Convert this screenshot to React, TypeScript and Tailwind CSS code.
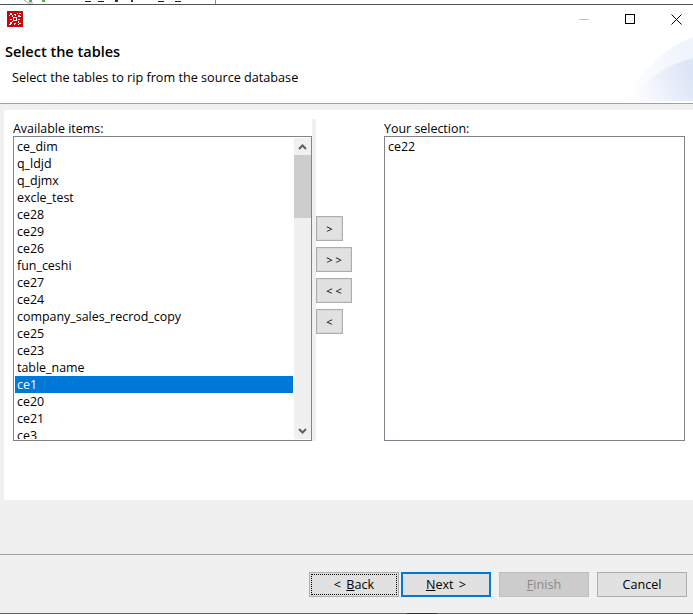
const items = ["ce_dim","q_ldjd","q_djmx","excle_test","ce28","ce29","ce26","fun_ceshi","ce27","ce24","company_sales_recrod_copy","ce25","ce23","table_name","ce1","ce20","ce21","ce3"];

function ShiftBtn({ label, wide }: { label: string; wide?: boolean }) {
  return (
    <button className={`h-[25px] ${wide ? "w-[36px]" : "w-[27px]"} border border-[#adadad] outline outline-[#d8d8d8] -outline-offset-2 bg-[#e1e1e1] text-[11px] leading-[21px] text-black flex items-center justify-center`}>{label}</button>
  );
}

function FootBtn({ children, cls }: { children: React.ReactNode; cls: string }) {
  return <button className={`h-[25px] w-[90px] flex items-center justify-center pt-[2px] text-[12.6px] [word-spacing:2px] ${cls}`}>{children}</button>;
}

export default function App() {
  return (
    <div className="w-[693px] h-[616px] overflow-hidden bg-white flex flex-col font-['Open_Sans','Liberation_Sans',sans-serif] text-[12px] text-black">
      <div className="h-[4px] bg-white">
        <svg width="216" height="4" viewBox="0 0 216 4" className="block">
          <path d="M24 0L28 3L33 3" stroke="#a8a8a8" fill="none" />
          <rect x="29" y="0" width="3" height="2" fill="#3fb54a" />
          <rect x="42" y="0" width="3" height="2" fill="#3fb54a" />
          <path d="M85 1.5h6M98 1.5h6M158 1.5h6M175 1.5h6" stroke="#222" fill="none" />
          <rect x="115" y="0" width="3" height="2" fill="#333" />
          <rect x="131" y="0" width="2" height="2" fill="#335" />
          <rect x="215" y="0" width="1" height="4" fill="#8a8a8a" />
        </svg>
      </div>
      <div className="h-[1px] bg-[#555555]" />
      <div className="relative h-[98px] bg-white">
        <div className="pt-[6px] pl-[7px] h-[37px]">
          <svg width="16" height="16" viewBox="0 0 16 16" shapeRendering="crispEdges" className="block">
            <rect width="16" height="16" fill="#c8070a" />
            <path d="M3 2h2v2H3zM2 4h1v1H2zM5 4h1v2H5zM10 2h1v1h-1zM12 2h2v1h-2zM11 4h2v2h-2zM13 5h1v1h-1zM6 6h4v1H6zM6 7h1v2H6zM9 7h1v2H9zM6 9h4v1H6zM7 3h2v1H7zM8 4h1v1H8zM3 8h2v1H3zM11 8h2v1h-2zM3 11h2v2H3zM2 13h2v1H2zM5 10h1v1H5zM11 10h1v2h-1zM12 12h2v1h-2zM11 13h1v1h-1zM7 12h2v1H7zM7 13h1v1H7z" fill="#fff" />
          </svg>
        </div>
        <div className="pl-[5px] text-[14.5px] leading-[20px] font-semibold">Select the tables</div>
        <div className="pl-[12px] pt-[6px] text-[12.65px] leading-[19px]">Select the tables to rip from the source database</div>
        <svg className="absolute right-0 top-[31px]" width="68" height="65" viewBox="0 0 68 65">
          <defs>
            <linearGradient id="g" x1="0" x2="1" y1="1" y2="0.5">
              <stop offset="0" stopColor="#ffffff" />
              <stop offset="1" stopColor="#f0f4fc" />
            </linearGradient>
            <linearGradient id="h" x1="0" x2="1" y1="0.9" y2="0.6">
              <stop offset="0" stopColor="#ffffff" />
              <stop offset="1" stopColor="#dde6f7" />
            </linearGradient>
          </defs>
          <path d="M0 65C14 38 36 13 68 1V65Z" fill="url(#g)" />
          <path d="M5 65C20 44 42 28 68 22V65Z" fill="url(#h)" />
        </svg>
        <div className="absolute -right-[6px] top-[2px] flex items-center">
          <div className="w-[46px] h-[24px] flex items-center justify-center"><div className="w-[10px] h-[1px] bg-[#c4c4c4]" /></div>
          <div className="w-[46px] h-[24px] flex items-center justify-center"><div className="w-[10px] h-[10px] border border-black" /></div>
          <div className="w-[46px] h-[24px] flex items-center justify-center">
            <svg width="11" height="11" viewBox="0 0 11 11"><path d="M0.5 0.5L10.5 10.5M10.5 0.5L0.5 10.5" stroke="#000" fill="none" /></svg>
          </div>
        </div>
      </div>
      <div className="h-[1px] bg-[#a0a0a0]" />
      <div className="h-[6px] bg-[#f0f0f0]" />
      <div className="h-[390px] bg-[#f0f0f0] pl-[4px]">
        <div className="h-full bg-white pl-[9px] pt-[9px] flex">
          <div className="w-[303px] bg-[#f0f0f0] h-[322px]">
            <div className="bg-white h-[17px] leading-[20px] text-[12.45px] w-[299px]">Available items:</div>
            <div className="w-[299px] h-[305px] border border-[#82828a] bg-white pl-[1px] pt-[1px] flex gap-[1px] overflow-hidden">
              <div className="w-[278px] h-[301px] overflow-hidden">
                {items.map((t) => (
                  <div key={t} className={`h-[17px] leading-[18px] pl-[2px] text-[12.45px] ${t === "ce1" ? "bg-[#0078d7] text-white" : ""}`}>{t}</div>
                ))}
              </div>
              <div className="w-[17px] h-[301px] bg-[#f0f0f0] flex flex-col">
                <div className="h-[17px] flex items-center justify-center">
                  <svg width="9" height="6" viewBox="0 0 9 6"><path d="M1 5L4.5 1.5L8 5" stroke="#606060" strokeWidth="2" fill="none" /></svg>
                </div>
                <div className="h-[63px] bg-[#cdcdcd]" />
                <div className="flex-1" />
                <div className="h-[17px] flex items-center justify-center">
                  <svg width="9" height="6" viewBox="0 0 9 6"><path d="M1 1L4.5 4.5L8 1" stroke="#606060" strokeWidth="2" fill="none" /></svg>
                </div>
              </div>
            </div>
          </div>
          <div className="w-[68px] pt-[97px] flex flex-col gap-[6px] items-start">
            <ShiftBtn label=">" />
            <ShiftBtn label="> >" wide />
            <ShiftBtn label="< <" wide />
            <ShiftBtn label="<" />
          </div>
          <div className="w-[301px]">
            <div className="h-[17px] leading-[20px] text-[12.45px]">Your selection:</div>
            <div className="h-[305px] border border-[#82828a] pl-[3px] pt-[1px] text-[12.45px] leading-[18px]">ce22</div>
          </div>
        </div>
      </div>
      <div className="h-[54px] bg-[#f0f0f0]" />
      <div className="h-[1px] bg-[#a0a0a0]" />
      <div className="h-[58px] bg-[#f0f0f0] pt-[17px] pl-[309px] flex items-start">
        <FootBtn cls="border border-[#adadad] bg-[#e1e1e1] outline-1 outline-dotted outline-black -outline-offset-3"><span>&lt; <u>B</u>ack</span></FootBtn>
        <div className="w-[2px]" />
        <FootBtn cls="border-2 border-[#0078d7] bg-[#e1e1e1]"><span><u>N</u>ext &gt;</span></FootBtn>
        <div className="w-[8px]" />
        <FootBtn cls="border border-[#bfbfbf] bg-[#cccccc] text-[#8a8a8a]"><span><u>F</u>inish</span></FootBtn>
        <div className="w-[8px]" />
        <FootBtn cls="border border-[#adadad] bg-[#e1e1e1]">Cancel</FootBtn>
      </div>
      <div className="h-[1px] bg-[#606060] pl-[407px]"><div className="w-[30px] h-[1px] bg-[#2c3440]" /></div>
      <div className="h-[2px] bg-white" />
    </div>
  );
}
